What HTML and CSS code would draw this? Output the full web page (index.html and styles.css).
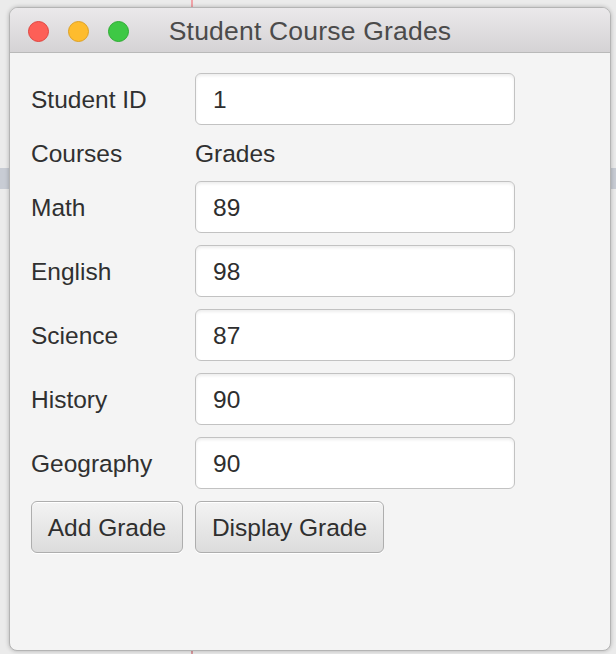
FILE: index.html
```html
<!DOCTYPE html>
<html>
<head>
<meta charset="utf-8">
<link rel="stylesheet" href="styles.css">
</head>
<body>
<div class="backdrop-line top-line"></div>
<div class="backdrop-line bottom-line"></div>
<div class="backdrop-band"></div>
<div class="window">
  <div class="titlebar">
    <div class="lights">
      <span class="light red"></span>
      <span class="light yellow"></span>
      <span class="light green"></span>
    </div>
    <div class="title">Student Course Grades</div>
  </div>
  <div class="content">
    <div class="form">
      <div class="label">Student ID</div>
      <div class="field">1</div>
      <div class="label">Courses</div>
      <div class="label">Grades</div>
      <div class="label">Math</div>
      <div class="field">89</div>
      <div class="label">English</div>
      <div class="field">98</div>
      <div class="label">Science</div>
      <div class="field">87</div>
      <div class="label">History</div>
      <div class="field">90</div>
      <div class="label">Geography</div>
      <div class="field">90</div>
      <div class="button add">Add Grade</div>
      <div class="button display">Display Grade</div>
    </div>
  </div>
</div>
</body>
</html>
```

FILE: styles.css
```css
html, body {
  margin: 0;
  padding: 0;
}
body {
  width: 616px;
  height: 654px;
  overflow: hidden;
  background: #ebebeb;
  position: relative;
  font-family: "Liberation Sans", Arial, sans-serif;
}
.backdrop-line {
  position: absolute;
  left: 191px;
  width: 2px;
  background: #f0a3a8;
}
.top-line { top: 0; height: 8px; }
.bottom-line { bottom: 0; height: 4px; background: #d99a9f; }
.backdrop-band {
  position: absolute;
  left: 0;
  right: 0;
  top: 168px;
  height: 21px;
  background: #c8ccd4;
}
.window {
  position: relative;
  margin: 7px 0 0 9px;
  width: 600px;
  height: 642px;
  border: 1px solid #b4b4b4;
  border-radius: 9px 9px 8px 8px;
  background: #f4f4f4;
  box-shadow: 0 0 4px rgba(0, 0, 0, 0.25);
  overflow: hidden;
}
.titlebar {
  height: 44px;
  border-bottom: 1px solid #b9b9b9;
  background: linear-gradient(#ebe9eb, #d5d3d5);
  display: flex;
  align-items: center;
  position: relative;
}
.lights {
  display: flex;
  gap: 19px;
  padding-left: 18px;
  padding-top: 2px;
}
.light {
  width: 21px;
  height: 21px;
  border-radius: 50%;
  box-sizing: border-box;
}
.red { background: #fd5f57; border: 1px solid #e0443e; }
.yellow { background: #febc2e; border: 1px solid #dea123; }
.green { background: #3ec845; border: 1px solid #2dac32; }
.title {
  position: absolute;
  left: 0;
  right: 0;
  top: 3px;
  bottom: 0;
  display: flex;
  align-items: center;
  justify-content: center;
  font-size: 26.5px;
  color: #4b4b4b;
  letter-spacing: 0.2px;
}
.content {
  padding: 20px 0 0 21px;
}
.form {
  display: grid;
  grid-template-columns: 152px 320px;
  grid-template-rows: 52px 32px 52px 52px 52px 52px 52px 52px;
  column-gap: 12px;
  row-gap: 12px;
}
.label {
  display: flex;
  align-items: center;
  padding-top: 2px;
  font-size: 24.5px;
  color: #303030;
}
.field {
  box-sizing: border-box;
  background: #ffffff;
  border: 1px solid #c2c2c2;
  border-radius: 6px;
  box-shadow: inset 0 2px 3px rgba(0, 0, 0, 0.07);
  display: flex;
  align-items: center;
  padding-left: 17px;
  padding-top: 1px;
  font-size: 24.5px;
  color: #2e2e2e;
}
.button {
  box-sizing: border-box;
  border: 1px solid #aeaeae;
  border-radius: 6px;
  background: linear-gradient(#f3f3f3, #dcdcdc);
  box-shadow: inset 0 1px 0 #ffffff, 0 1px 0 #ffffff;
  display: flex;
  align-items: center;
  justify-content: center;
  padding-top: 1px;
  font-size: 24.5px;
  color: #2f2f2f;
}
.button.display {
  width: 189px;
}
```
